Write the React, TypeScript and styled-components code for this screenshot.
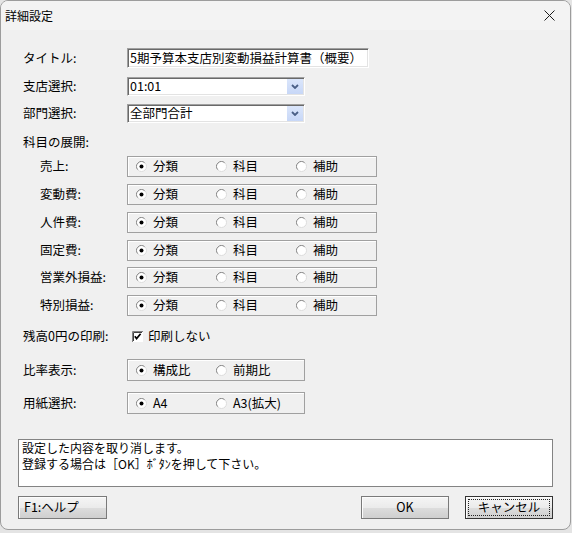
import React from 'react';
import styled, { createGlobalStyle } from 'styled-components';

const GlobalStyle = createGlobalStyle`
  html, body {
    margin: 0;
    padding: 0;
    background: #e4e4e4;
  }
  body {
    font-family: "Noto Sans CJK JP", "Noto Sans", sans-serif;
    font-size: 12.5px;
    color: #000;
  }
`;

const Window = styled.div`
  box-sizing: border-box;
  width: 571px;
  height: 530px;
  background: #f0f0f0;
  border: 1px solid #9c9c9c;
  border-radius: 8px;
  overflow: hidden;
  display: flex;
  flex-direction: column;
`;

const TitleBar = styled.div`
  height: 29px;
  flex: none;
  display: flex;
  align-items: center;
  justify-content: space-between;
  padding-left: 4px;
  background: #f3f3f3;
  font-size: 12px;
`;

const CloseBox = styled.div`
  width: 36px;
  height: 29px;
  margin-right: 1px;
  display: flex;
  align-items: center;
  justify-content: center;
  padding-right: 2px;
`;

const Body = styled.div`
  display: flex;
  flex-direction: column;
  padding: 0 17px 0 16px;
`;

const Row = styled.div<{ $mt: number; $h: number }>`
  display: grid;
  grid-template-columns: 104px auto;
  align-items: center;
  margin-top: ${(p) => p.$mt}px;
  height: ${(p) => p.$h}px;
  padding-left: 6px;
  justify-content: start;
`;

const Label = styled.div<{ $indent?: boolean }>`
  padding-left: ${(p) => (p.$indent ? 17 : 0)}px;
  white-space: nowrap;
  line-height: 1;
`;

const TextBox = styled.div<{ $w: number }>`
  box-sizing: border-box;
  width: ${(p) => p.$w}px;
  height: 100%;
  background: #fff;
  border-top: 1px solid #a0a0a0;
  border-left: 1px solid #a0a0a0;
  border-right: 1px solid #fff;
  border-bottom: 1px solid #fff;
  box-shadow: inset 1px 1px 0 #696969, inset -1px -1px 0 #e3e3e3;
  display: flex;
  align-items: center;
  padding-left: 2px;
  font-size: 12.5px;
  line-height: 1;
  white-space: nowrap;
  overflow: hidden;
`;

const ComboValue = styled.div`
  flex: 1;
  white-space: nowrap;
`;

const ComboArrow = styled.div`
  width: 16px;
  align-self: stretch;
  margin: 1px 1px 1px 0;
  background: linear-gradient(#dbe6fb, #c7d7f7);
  display: flex;
  align-items: center;
  justify-content: center;
`;

const Group = styled.div<{ $w: number }>`
  box-sizing: border-box;
  width: ${(p) => p.$w}px;
  height: 100%;
  border: 1px solid #a0a0a0;
  box-shadow: inset 1px 1px 0 #fff;
  display: flex;
  align-items: center;
  padding-left: 8px;
`;

const Option = styled.div`
  width: 80px;
  display: flex;
  align-items: center;
  gap: 6px;
  white-space: nowrap;
  line-height: 1;
`;

const CheckWrap = styled.div`
  display: flex;
  align-items: center;
  gap: 5px;
  margin-left: 5px;
  line-height: 1;
`;

const Message = styled.div`
  box-sizing: border-box;
  margin-top: 25px;
  width: 535px;
  height: 48px;
  margin-left: 1px;
  background: #fff;
  border: 1px solid #838383;
  padding: 0 3px;
  font-size: 12px;
`;

const MessageLine = styled.div`
  height: 16px;
  line-height: 16px;
  white-space: nowrap;
`;

const ButtonBar = styled.div`
  margin-top: 9px;
  margin-left: 1px;
  width: 535px;
  display: flex;
  align-items: center;
  gap: 16px;
`;

const Button = styled.div<{ $w: number; $left?: boolean; $focused?: boolean }>`
  box-sizing: border-box;
  width: ${(p) => p.$w}px;
  height: 23px;
  display: flex;
  align-items: center;
  justify-content: ${(p) => (p.$left ? 'flex-start' : 'center')};
  padding-left: ${(p) => (p.$left ? 5 : 0)}px;
  border: 1px solid ${(p) => (p.$focused ? '#333' : '#7a7a7a')};
  background: linear-gradient(#f5f5f5 0%, #ebebeb 50%, #dddddd 51%, #cfcfcf 100%);
  box-shadow: inset 1px 1px 0 #fcfcfc;
  font-size: 12.5px;
  line-height: 1;
  position: relative;
  &::after {
    content: '';
    display: ${(p) => (p.$focused ? 'block' : 'none')};
    position: absolute;
    inset: 2px;
    border: 1px dotted #222;
  }
`;

const Spacer = styled.div`
  flex: 1;
`;

function Radio({ checked }: { checked?: boolean }) {
  return (
    <svg width="11" height="11" viewBox="0 0 11 11" style={{ flex: 'none' }}>
      <circle cx="5.5" cy="5.5" r="5" fill="#fff" stroke="#dcdcdc" />
      <path d="M1.7 8.6 A4.9 4.9 0 0 1 8.6 1.7" fill="none" stroke="#8a8a8a" />
      {checked && <circle cx="5.5" cy="5.5" r="2" fill="#000" />}
    </svg>
  );
}

function Check() {
  return (
    <svg width="11" height="11" viewBox="0 0 11 11" style={{ flex: 'none' }}>
      <rect x="0" y="0" width="11" height="11" fill="#fff" />
      <path d="M0.5 11 V0.5 H11" fill="none" stroke="#808080" />
      <path d="M1.5 10 V1.5 H10" fill="none" stroke="#404040" />
      <path d="M2.8 5.2 L4.6 7.6 L8.6 2.8" fill="none" stroke="#000" strokeWidth="1.7" />
    </svg>
  );
}

function Chevron() {
  return (
    <svg width="8" height="5" viewBox="0 0 8 5">
      <path d="M1 1 L4 4 L7 1" fill="none" stroke="#4a5f86" strokeWidth="1.8" />
    </svg>
  );
}

function Combo({ value }: { value: string }) {
  return (
    <TextBox $w={178}>
      <ComboValue>{value}</ComboValue>
      <ComboArrow>
        <Chevron />
      </ComboArrow>
    </TextBox>
  );
}

const expandRows: { label: string; mt: number }[] = [
  { label: '売上:', mt: 5 },
  { label: '変動費:', mt: 7 },
  { label: '人件費:', mt: 7 },
  { label: '固定費:', mt: 7 },
  { label: '営業外損益:', mt: 6 },
  { label: '特別損益:', mt: 7 },
];

export default function App() {
  return (
    <>
      <GlobalStyle />
      <Window>
        <TitleBar>
          <span>詳細設定</span>
          <CloseBox>
            <svg width="11" height="11" viewBox="0 0 11 11">
              <path d="M0.5 0.5 L10.5 10.5 M10.5 0.5 L0.5 10.5" stroke="#1b1b1b" strokeWidth="1" />
            </svg>
          </CloseBox>
        </TitleBar>
        <Body>
          <Row $mt={18} $h={20}>
            <Label>タイトル:</Label>
            <TextBox $w={242}>5期予算本支店別変動損益計算書（概要）</TextBox>
          </Row>
          <Row $mt={9} $h={19}>
            <Label>支店選択:</Label>
            <Combo value="01:01" />
          </Row>
          <Row $mt={8} $h={19}>
            <Label>部門選択:</Label>
            <Combo value="全部門合計" />
          </Row>
          <Row $mt={10} $h={18}>
            <Label>科目の展開:</Label>
          </Row>
          {expandRows.map((r) => (
            <Row key={r.label} $mt={r.mt} $h={21}>
              <Label $indent>{r.label}</Label>
              <Group $w={250}>
                <Option>
                  <Radio checked />
                  分類
                </Option>
                <Option>
                  <Radio />
                  科目
                </Option>
                <Option>
                  <Radio />
                  補助
                </Option>
              </Group>
            </Row>
          ))}
          <Row $mt={12} $h={16}>
            <Label>残高0円の印刷:</Label>
            <CheckWrap>
              <Check />
              印刷しない
            </CheckWrap>
          </Row>
          <Row $mt={15} $h={22}>
            <Label>比率表示:</Label>
            <Group $w={178}>
              <Option>
                <Radio checked />
                構成比
              </Option>
              <Option>
                <Radio />
                前期比
              </Option>
            </Group>
          </Row>
          <Row $mt={11} $h={22}>
            <Label>用紙選択:</Label>
            <Group $w={178}>
              <Option>
                <Radio checked />
                A4
              </Option>
              <Option>
                <Radio />
                A3(拡大)
              </Option>
            </Group>
          </Row>
          <Message>
            <MessageLine>設定した内容を取り消します。</MessageLine>
            <MessageLine>登録する場合は［OK］ﾎﾞﾀﾝを押して下さい。</MessageLine>
          </Message>
          <ButtonBar>
            <Button $w={89} $left>
              F1:ヘルプ
            </Button>
            <Spacer />
            <Button $w={88}>OK</Button>
            <Button $w={88} $focused>
              キャンセル
            </Button>
          </ButtonBar>
        </Body>
      </Window>
    </>
  );
}
